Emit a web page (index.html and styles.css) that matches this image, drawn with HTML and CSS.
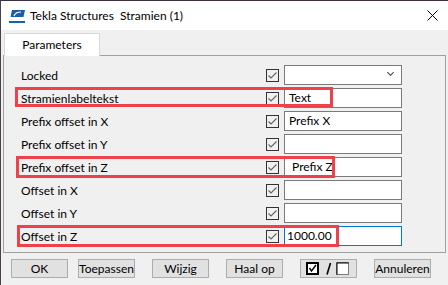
FILE: index.html
```html
<!DOCTYPE html>
<html lang="nl">
<head>
  <meta charset="UTF-8" />
  <title>Tekla Structures  Stramien (1)</title>
  <link rel="stylesheet" href="styles.css">
</head>
<body>

<div class="venster">
  <div class="titelbalk">
    <svg class="logo" width="17" height="15" viewBox="0 0 17 15">
      <path d="M3 1 H16 L14.5 8 H1.5 Z" fill="#1d5fa3"/>
      <path d="M5 7 C6 4 9 3 12 3" stroke="#fff" stroke-width="1.2" fill="none"/>
      <rect x="0" y="12" width="16" height="2" fill="#1d5fa3"/>
    </svg>
    <span class="titel">Tekla Structures  Stramien (1)</span>
    <svg class="sluiten" width="11" height="11" viewBox="0 0 11 11">
      <path d="M0.5 0.5 L10.5 10.5 M10.5 0.5 L0.5 10.5" stroke="#000" stroke-width="1"/>
    </svg>
  </div>

  <div class="inhoud">
    <div class="tabs">
      <div class="tab">Parameters</div>
    </div>

    <div class="paneel">
      <div class="rij">
        <span class="label">Locked</span>
        <svg class="vink" width="13" height="13" viewBox="0 0 13 13"><rect x="0.5" y="0.5" width="12" height="12" fill="none" stroke="#333"/><path d="M2.5 6.5 L5 9 L10.5 3.5" stroke="#666" stroke-width="1.2" fill="none"/></svg>
        <div class="veld keuze"><span class="pijl"></span></div>
      </div>
      <div class="rij">
        <span class="label">Stramienlabeltekst</span>
        <svg class="vink" width="13" height="13" viewBox="0 0 13 13"><rect x="0.5" y="0.5" width="12" height="12" fill="none" stroke="#333"/><path d="M2.5 6.5 L5 9 L10.5 3.5" stroke="#666" stroke-width="1.2" fill="none"/></svg>
        <div class="veld">Text</div>
        <span class="markering m1"></span>
      </div>
      <div class="rij">
        <span class="label">Prefix offset in X</span>
        <svg class="vink" width="13" height="13" viewBox="0 0 13 13"><rect x="0.5" y="0.5" width="12" height="12" fill="none" stroke="#333"/><path d="M2.5 6.5 L5 9 L10.5 3.5" stroke="#666" stroke-width="1.2" fill="none"/></svg>
        <div class="veld">Prefix X</div>
      </div>
      <div class="rij">
        <span class="label">Prefix offset in Y</span>
        <svg class="vink" width="13" height="13" viewBox="0 0 13 13"><rect x="0.5" y="0.5" width="12" height="12" fill="none" stroke="#333"/><path d="M2.5 6.5 L5 9 L10.5 3.5" stroke="#666" stroke-width="1.2" fill="none"/></svg>
        <div class="veld"></div>
      </div>
      <div class="rij">
        <span class="label">Prefix offset in Z</span>
        <svg class="vink" width="13" height="13" viewBox="0 0 13 13"><rect x="0.5" y="0.5" width="12" height="12" fill="none" stroke="#333"/><path d="M2.5 6.5 L5 9 L10.5 3.5" stroke="#666" stroke-width="1.2" fill="none"/></svg>
        <div class="veld">&nbsp;Prefix Z</div>
        <span class="markering m2"></span>
      </div>
      <div class="rij">
        <span class="label">Offset in X</span>
        <svg class="vink" width="13" height="13" viewBox="0 0 13 13"><rect x="0.5" y="0.5" width="12" height="12" fill="none" stroke="#333"/><path d="M2.5 6.5 L5 9 L10.5 3.5" stroke="#666" stroke-width="1.2" fill="none"/></svg>
        <div class="veld"></div>
      </div>
      <div class="rij">
        <span class="label">Offset in Y</span>
        <svg class="vink" width="13" height="13" viewBox="0 0 13 13"><rect x="0.5" y="0.5" width="12" height="12" fill="none" stroke="#333"/><path d="M2.5 6.5 L5 9 L10.5 3.5" stroke="#666" stroke-width="1.2" fill="none"/></svg>
        <div class="veld"></div>
      </div>
      <div class="rij">
        <span class="label">Offset in Z</span>
        <svg class="vink" width="13" height="13" viewBox="0 0 13 13"><rect x="0.5" y="0.5" width="12" height="12" fill="none" stroke="#333"/><path d="M2.5 6.5 L5 9 L10.5 3.5" stroke="#666" stroke-width="1.2" fill="none"/></svg>
        <div class="veld actief">1000.00</div>
        <span class="markering m3"></span>
      </div>
    </div>

    <div class="knoppen">
      <button class="knop ok">OK</button>
      <button class="knop">Toepassen</button>
      <button class="knop">Wijzig</button>
      <button class="knop">Haal op</button>
      <button class="knop">
        <svg width="45" height="13" viewBox="0 0 45 13">
          <rect x="0.5" y="0.5" width="12" height="12" fill="#fff" stroke="#000"/>
          <rect x="1.5" y="1.5" width="10" height="10" fill="none" stroke="#000"/>
          <path d="M3.5 6 L5.5 9 L10 3" stroke="#000" stroke-width="1.4" fill="none"/>
          <path d="M21 12.5 L24.5 1" stroke="#000" stroke-width="1.6"/>
          <rect x="30.5" y="0.5" width="12" height="12" fill="#fff" stroke="#7a7a7a"/>
          <path d="M31 12.5 V1 H42.5" stroke="#000" stroke-width="1" fill="none"/>
        </svg>
      </button>
      <button class="knop">Annuleren</button>
    </div>
  </div>
</div>

</body>
</html>
```

FILE: styles.css
```css
body {
  margin: 0;
  padding: 0;
  font-family: Lato, "Noto Sans", sans-serif;
  font-size: 12px;
  color: #000;
}

.venster {
  width: 448px;
  height: 285px;
  box-sizing: border-box;
  border-top: 1px solid #3a3040;
  border-left: 1px solid #4a3f50;
  background-color: #f0f0f0;
  overflow: hidden;
}

.titelbalk {
  height: 29px;
  background-color: #fff;
  display: flex;
  align-items: center;
}

.logo {
  margin-left: 8px;
  margin-top: 1px;
}

.titel {
  margin-left: 4px;
  white-space: pre;
  font-size: 12px;
}

.sluiten {
  margin-left: auto;
  margin-right: 10px;
}

.inhoud {
  padding: 3px 2px 0 2px;
}

.tabs {
  display: flex;
  height: 22px;
}

.tab {
  width: 96px;
  box-sizing: border-box;
  margin-left: 1px;
  background-color: #fff;
  border: 1px solid #d9d9d9;
  border-bottom: none;
  text-align: center;
  line-height: 22px;
  position: relative;
  z-index: 1;
  height: 23px;
}

.paneel {
  width: 443px;
  height: 198px;
  box-sizing: border-box;
  border: 1px solid #a0a0a0;
  padding: 9px 0 0 17px;
}

.rij {
  position: relative;
  display: flex;
  align-items: center;
  height: 20px;
  margin-bottom: 3px;
}

.label {
  width: 245px;
}

.vink {
  display: block;
  margin-right: 5px;
}

.veld {
  width: 118px;
  height: 20px;
  box-sizing: border-box;
  border: 1px solid #7a7a7a;
  background-color: #fff;
  padding-left: 4px;
  line-height: 18px;
  position: relative;
}

.veld.actief {
  border-color: #0078d7;
  padding-left: 2px;
}

.pijl {
  position: absolute;
  right: 8px;
  top: 4px;
  width: 4px;
  height: 4px;
  border-right: 1px solid #444;
  border-bottom: 1px solid #444;
  transform: rotate(45deg);
}

.markering {
  position: absolute;
  top: -1px;
  height: 22px;
  box-sizing: border-box;
  border: 3px solid #ef4149;
  pointer-events: none;
}

.m1 {
  left: -6px;
  width: 318px;
  top: -1px;
  height: 20px;
}

.m2 {
  left: -5px;
  width: 319px;
}

.m3 {
  left: -4px;
  width: 322px;
}

.knoppen {
  display: flex;
  gap: 17px;
  padding: 6px 0 0 8px;
}

.knop {
  width: 57px;
  height: 19px;
  box-sizing: border-box;
  padding: 0;
  margin: 0;
  border: 1px solid #adadad;
  background-color: #e1e1e1;
  font-family: Lato, "Noto Sans", sans-serif;
  font-size: 12px;
  color: #000;
  line-height: 16px;
  display: flex;
  align-items: center;
  justify-content: center;
}

.knop.ok {
  margin-right: -7px;
}
```
